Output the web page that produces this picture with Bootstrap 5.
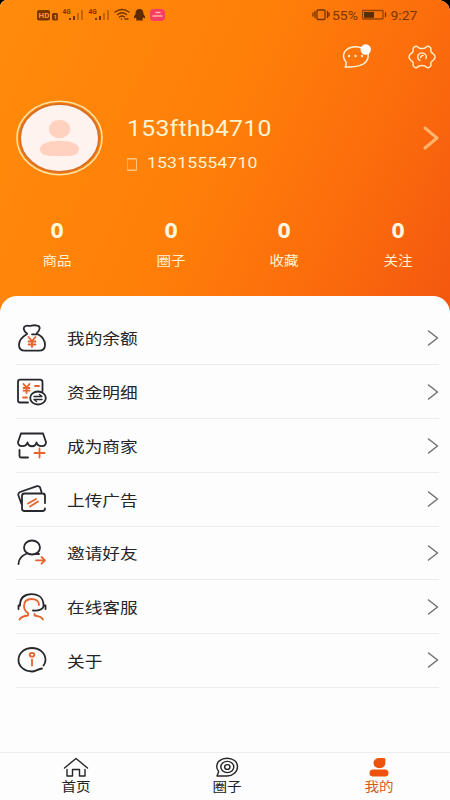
<!DOCTYPE html>
<html lang="zh-CN">
<head>
<meta charset="utf-8">
<meta name="viewport" content="width=device-width, initial-scale=1">
<title>我的</title>
<link href="https://cdn.jsdelivr.net/npm/bootstrap@5.3.0/dist/css/bootstrap.min.css" rel="stylesheet">
<style>
  body { width:450px; height:800px; overflow:hidden; background:#000; font-family:Roboto,"Noto Sans CJK SC",sans-serif; }
  svg { display:block; flex:none; fill:none; stroke-linecap:round; stroke-linejoin:round; }
  .screen { height:800px; background:#fdfdfd; border-radius:7px 12px 0 0; overflow:hidden; }
  .hero { height:316px; background:linear-gradient(116deg,#ff8b0b 0%,#ff7f09 46%,#fc6e0c 72%,#f4570f 100%); color:#fff3d0; }
  .statusbar { height:30px; padding:0 32px 0 37px; color:#7b3500; }
  .tools { height:52px; padding:1px 14px 0 0; gap:37px; }
  .profile { height:112px; padding:0 10px 0 16px; }
  .wide { display:inline-block; transform-origin:0 50%; white-space:nowrap; line-height:1; }
  .lines { padding-top:14px; }
  .username { font-size:22px; transform:scaleX(1.125); letter-spacing:.25px; }
  .number { margin-top:13px; }
  .phone { font-size:15.5px; transform:scaleX(1.14); letter-spacing:.1px; margin-left:10px; }
  .stats { height:86px; padding-top:24px; }
  .stat { flex:0 0 113.8px; }
  .stat b { font:700 21px/24px "Noto Sans",sans-serif; color:#fff6df; transform:scaleX(1.1); }
  .stat span, .tab span { transform-origin:50% 50%; font-size:13px; transform:scaleX(1.12); }
  .stat span { margin-top:12px; }
  .sheet { height:456px; margin-top:-20px; padding:15.8px 11px 0 16px; background:#fdfdfd; border-radius:17px 17px 0 0; }
  .entry { height:53.7px; border-bottom:1.5px solid #ececef; color:#252525; padding-left:1px; }
  .entry .wide { font-size:15.3px; transform:scaleX(1.155); margin:4px 0 0 19.5px; }
  .k { stroke:#27282d; stroke-width:1.8; }
  .o { stroke:#e8622c; stroke-width:1.8; }
  .thin { stroke-width:1.3; }
  .tabs { height:49px; border-top:1px solid #ededed; color:#222; }
  .tab { flex:0 0 151.5px; padding-top:4px; }
  .tab span { margin-top:3px; }
  .tab.on { color:#d9581e; }
</style>
<script src="https://cdn.jsdelivr.net/npm/bootstrap@5.3.0/dist/js/bootstrap.bundle.min.js"></script>
</head>
<body>
<div class="screen d-flex flex-column">
  <header class="hero flex-shrink-0">
    <div class="statusbar d-flex align-items-center justify-content-between">
      <svg width="130" height="18" viewBox="37 6 130 18">
        <rect x="37" y="10" width="13" height="10.500" rx="2" fill="#7b3500"/>
        <text x="38.500" y="18.300" font-size="8" font-weight="700" fill="#ff9b2c">HD</text>
        <rect x="52" y="13" width="6" height="7.500" rx="1.500" fill="#7b3500"/>
        <text x="53.500" y="19" font-size="6" font-weight="700" fill="#ff9b2c">1</text>
        <g fill="#7b3500" font-size="6.500" font-weight="700"><text x="62.500" y="14">4G</text><text x="88.500" y="14">4G</text></g>
        <g stroke="#713400" stroke-width="2" stroke-linecap="butt"><path d="M70 20v-2M74 20v-4M96 20v-2M100 20v-4"/><path opacity=".42" d="M78 20v-7M82 20v-10M104 20v-7M108 20v-10"/></g>
        <g stroke="#713400" stroke-width="1.500"><path d="M115 12q7-5 14 0M117.500 14.500q4.500-3.500 9 0M119.500 17q2.500-2 5 0"/><path d="M121.500 19v.3M125 19h3"/></g>
        <path fill="#5e2b00" d="M139.500 9c-3 0-4.200 2-4 5-2 2.500-2 4-1.200 4.500l1.500-1q.3 1.200 1 1.700-1 .5-.8 1.300h7q.2-.8-.8-1.300.7-.5 1-1.700l1.500 1c.8-.5.8-2-1.200-4.500.2-3-1-5-4-5z"/>
        <rect x="150" y="9" width="15" height="12" rx="4" fill="#f73e62"/>
        <path d="M153 16h9M156 12.500h4" stroke="#ffb3a2" stroke-width="1.500"/>
      </svg>
      <svg width="106" height="18" viewBox="312 6 106 18">
        <g stroke="#713400" stroke-width="1.300"><rect x="317" y="10" width="8" height="9.500" rx="1"/><path d="M315 11.500v6M313 13v3M327.500 11.500v6M329 13v3"/><rect x="362.500" y="10.500" width="20.500" height="8.500" rx=".5" opacity=".75"/><path d="M385.500 13v3.500"/></g>
        <rect x="364" y="12" width="10" height="5.800" fill="#5e2b00"/>
        <g fill="#7b3500" font-size="13"><text x="332" y="19.600" textLength="26" lengthAdjust="spacingAndGlyphs">55%</text><text x="390.500" y="19.600" textLength="27" lengthAdjust="spacingAndGlyphs">9:27</text></g>
      </svg>
    </div>
    <div class="tools d-flex align-items-center justify-content-end">
      <svg width="29" height="25" viewBox="343 44 29 25" stroke="#fff3d6" stroke-width="1.500">
        <path d="M361.500 47.500q-2.500-.7-5-.7c-7 0-12 4-12 9.500 0 2.500 1 4 2.500 5.600.8 1.800.2 3.600-.8 5.200 7.800 0 13-.2 18.300-3.300q4.500-3 4.700-7.500 0-2-.7-3.500"/>
        <g fill="#fff3d6" stroke="none"><circle cx="350" cy="56" r="1.200"/><circle cx="356.500" cy="56" r="1.200"/><circle cx="363" cy="56" r="1.200"/></g>
        <circle cx="366.700" cy="49.500" r="5.200" fill="#fff" stroke="none"/>
      </svg>
      <svg width="28" height="24" viewBox="-14 -12 28 24" stroke="#ffebc6" stroke-width="1.500">
        <path d="M-3-9Q0-7.800 3-9L4.300-10.200Q6-11.300 7.600-10.200 9.400-9 8.800-7 8.500-4.800 10.800-3.600 13-2 13 0 13 2 10.800 3.600 8.500 4.800 8.800 7 9.400 9 7.600 10.200 6 11.300 4.300 10.200L3 9Q0 7.800-3 9L-4.300 10.200Q-6 11.300-7.600 10.200-9.400 9-8.800 7-8.500 4.800-10.800 3.600-13 2-13 0-13-2-10.800-3.600-8.500-4.800-8.800-7-9.400-9-7.600-10.200-6-11.300-4.300-10.200Z"/>
        <path d="M-2 3.500A4.300 4 0 1 1 4 1.500M-1.300.5Q-1-1.500 1-1.500"/>
      </svg>
    </div>
    <div class="profile d-flex align-items-center">
      <svg width="87" height="76" viewBox="16 100 87 76">
        <ellipse cx="59.500" cy="138" rx="42.600" ry="36.700" stroke="#ffe1a2" stroke-width="1.600"/>
        <ellipse cx="59.500" cy="138" rx="39.500" ry="34" fill="#fff3f0" stroke="#d96f22" stroke-width="2"/>
        <ellipse cx="59.500" cy="129" rx="10.600" ry="9.300" fill="#ffd1be"/>
        <path fill="#ffd1be" d="M40 149c0-5 8-8.300 19.500-8.300S79 144 79 149c0 5-5 7-11 7H51c-6 0-11-2-11-7z"/>
      </svg>
      <div class="lines d-flex flex-column">
        <div class="ps-4"><span class="wide username">153fthb4710</span></div>
        <div class="number ps-4 d-flex align-items-center">
          <svg width="10" height="13" viewBox="0 0 10 13" stroke="#ffc37b"><rect x=".5" y=".5" width="9" height="12"/><path d="M1 1.500h8M1 11.500h8" stroke-width=".6"/></svg>
          <span class="wide phone">15315554710</span>
        </div>
      </div>
      <svg class="ms-auto" width="17" height="26" viewBox="0 0 17 26"><path d="M2 3l12 10L2 23" stroke="#ffb36d" stroke-width="3"/></svg>
    </div>
    <div class="stats d-flex">
      <div class="stat d-flex flex-column align-items-center"><b>0</b><span class="wide">商品</span></div>
      <div class="stat d-flex flex-column align-items-center"><b>0</b><span class="wide">圈子</span></div>
      <div class="stat d-flex flex-column align-items-center"><b>0</b><span class="wide">收藏</span></div>
      <div class="stat d-flex flex-column align-items-center"><b>0</b><span class="wide">关注</span></div>
    </div>
  </header>
  <main class="sheet position-relative flex-shrink-0">
    <div class="entry d-flex align-items-center">
      <svg width="30" height="28" viewBox="0 0 30 28"><path class="k" d="M10 9.500C6 7 6 3 8.500 2c2-1 3.500.5 6-.3C17 1 18 1 20 1.700c4 .5 3 4.500 0 7.200M10 10C5 13 2 17 2 21c0 4 2.500 5.700 6 5.700h14c4 0 6-2 6-5.700 0-4.500-3-8.500-7-10.700h-6"/><path class="o" d="M11.500 13l3.500 4 3.500-4M15 17v6M11.500 17.500h7M11.500 20.500h7"/></svg>
      <span class="wide">我的余额</span>
      <svg class="ms-auto" width="13" height="18" viewBox="0 0 13 18"><path d="M2.500 2l9 7-9 7" stroke="#707070" stroke-width="1.500"/></svg>
    </div>
    <div class="entry d-flex align-items-center">
      <svg width="30" height="28" viewBox="0 0 30 28"><path class="k" d="M11 24.500H3q-2 0-2-2V4Q1 1.700 3 1.700h20q2.500 0 2.500 2.500V13"/><ellipse class="k" cx="21" cy="20" rx="7.800" ry="6.500"/><path class="k thin" d="M17 18.500h8l-2.500-2M25 21.500h-8l2.500 2"/><path class="o" d="M6.500 6l3 3.500 3-3.500M9.500 9.500V15M6.500 10h6M6.500 12.700h6M18 8h4M6 19.500h4"/></svg>
      <span class="wide">资金明细</span>
      <svg class="ms-auto" width="13" height="18" viewBox="0 0 13 18"><path d="M2.500 2l9 7-9 7" stroke="#707070" stroke-width="1.500"/></svg>
    </div>
    <div class="entry d-flex align-items-center">
      <svg width="30" height="28" viewBox="0 0 30 28"><path class="k" d="M4 1.500h22l3 8.500c0 5.500-8 5.500-9.500.5-1 5-8 5-9 0-1.500 5-9.500 5-9.500-.5zM2.500 18v6q0 1.500 1.500 1.500h7"/><path class="o" d="M22.500 16.500v9M17.500 21h10"/></svg>
      <span class="wide">成为商家</span>
      <svg class="ms-auto" width="13" height="18" viewBox="0 0 13 18"><path d="M2.500 2l9 7-9 7" stroke="#707070" stroke-width="1.500"/></svg>
    </div>
    <div class="entry d-flex align-items-center">
      <svg width="30" height="28" viewBox="0 0 30 28"><path class="k" d="M4.500 19L1.300 10Q1 8 3 7L20 1.200q2-.5 3 1l2 6.500M28 18v-7q0-2.500-2.500-2.500H7.500Q5 8.500 5 11v12.500Q5 26 7.500 26h18q2.500 0 2.500-2.500"/><path class="o" d="M11 18.500l8-4.500M13 21.500l8-5"/></svg>
      <span class="wide">上传广告</span>
      <svg class="ms-auto" width="13" height="18" viewBox="0 0 13 18"><path d="M2.500 2l9 7-9 7" stroke="#707070" stroke-width="1.500"/></svg>
    </div>
    <div class="entry d-flex align-items-center">
      <svg width="30" height="28" viewBox="0 0 30 28"><ellipse class="k" cx="15" cy="8.500" rx="8" ry="7"/><path class="k" d="M10 14.500C5 16.500 1.500 20 1.500 25M19 15h3"/><path class="o" d="M19 21.300h9M24.500 18l3.500 3.300-3.500 3.300"/></svg>
      <span class="wide">邀请好友</span>
      <svg class="ms-auto" width="13" height="18" viewBox="0 0 13 18"><path d="M2.500 2l9 7-9 7" stroke="#707070" stroke-width="1.500"/></svg>
    </div>
    <div class="entry d-flex align-items-center">
      <svg width="30" height="28" viewBox="0 0 30 28"><path class="k" d="M1.500 16v-3.500H3C3 5 7.500 1.200 14.500 1.200S26.500 5 26.500 12.500h2V16M26.500 13.500q-1.500 4.500-10.500 4"/><path class="o" d="M22 12c0-4-3-6-7.500-6S7 8.500 7 13c0 3 1.500 5.500 4 7v2.500c-4 .5-7 1.500-8.500 4M17.500 21v1.500c4 .5 7.500 1.500 8.500 4"/></svg>
      <span class="wide">在线客服</span>
      <svg class="ms-auto" width="13" height="18" viewBox="0 0 13 18"><path d="M2.500 2l9 7-9 7" stroke="#707070" stroke-width="1.500"/></svg>
    </div>
    <div class="entry d-flex align-items-center">
      <svg width="30" height="28" viewBox="0 0 30 28"><path class="k" d="M26.500 19.500C28 17.500 28.500 16 28.500 14c0-7-6-12-13.500-12S1.500 7 1.500 14 8 25.500 15 25.500c3.500 0 4.500-2 10-3"/><ellipse class="o" cx="15" cy="8.800" rx="2.300" ry="1.900"/><path class="o" d="M15 13.500v6"/></svg>
      <span class="wide">关于</span>
      <svg class="ms-auto" width="13" height="18" viewBox="0 0 13 18"><path d="M2.500 2l9 7-9 7" stroke="#707070" stroke-width="1.500"/></svg>
    </div>
  </main>
  <nav class="tabs d-flex flex-shrink-0">
    <div class="tab d-flex flex-column align-items-center">
      <svg width="26" height="20" viewBox="0 0 26 20" stroke="#252525" stroke-width="1.400"><path d="M1.500 11L13 1.500 24.500 11M4 12.500V19h5.500v-6.500h7V19H22v-6.500"/></svg>
      <span class="wide">首页</span>
    </div>
    <div class="tab d-flex flex-column align-items-center">
      <svg width="24" height="20" viewBox="0 0 24 20" stroke="#252525" stroke-width="1.400"><path d="M2 19l1.700-4.500C2 12.500 1.700 11 1.700 9.500 1.700 5 6 1.200 12 1.200s10.500 3.500 10.500 8.500S18 19 12 19z"/><ellipse cx="12.300" cy="10" rx="6.500" ry="5.600"/><ellipse cx="12.300" cy="10" rx="2.700" ry="2.400"/></svg>
      <span class="wide">圈子</span>
    </div>
    <div class="tab on d-flex flex-column align-items-center">
      <svg width="20" height="20" viewBox="0 0 20 20"><path fill="#ee530d" d="M10.500 1H15q1.300 0 1.300 1.300V6c0 3.200-2.500 5.200-5.900 5.200S4.500 9 4.500 6s2.600-5 6-5z"/><rect x=".5" y="12.500" width="19" height="7" rx="3.500" fill="#ee530d"/></svg>
      <span class="wide">我的</span>
    </div>
  </nav>
</div>
</body>
</html>
